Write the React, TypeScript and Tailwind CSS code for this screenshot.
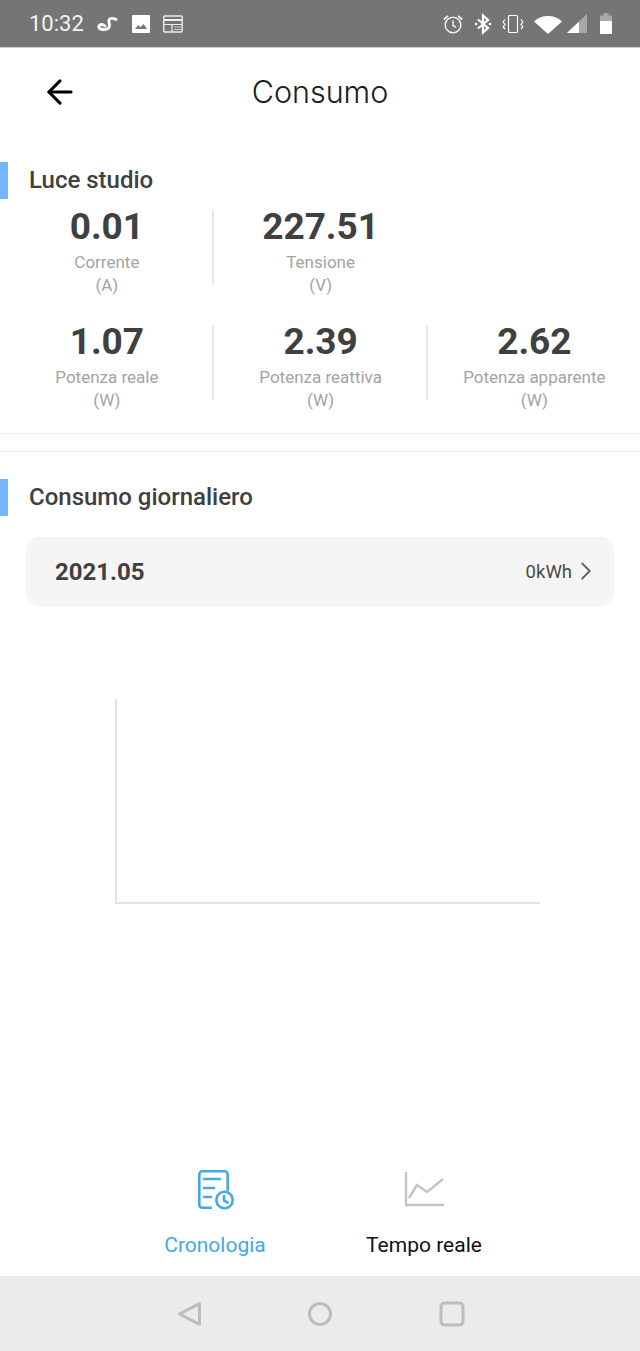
import { ArrowLeft, ChevronRight } from "lucide-react";

type Stat = { value: string; label: string; unit: string };

const topStats: Stat[] = [
  { value: "0.01", label: "Corrente", unit: "(A)" },
  { value: "227.51", label: "Tensione", unit: "(V)" },
];

const bottomStats: Stat[] = [
  { value: "1.07", label: "Potenza reale", unit: "(W)" },
  { value: "2.39", label: "Potenza reattiva", unit: "(W)" },
  { value: "2.62", label: "Potenza apparente", unit: "(W)" },
];

function StatusIcons() {
  return (
    <div className="flex items-center">
      {/* alarm */}
      <svg width="22" height="22" viewBox="0 0 22 22" fill="none" stroke="#fff" strokeWidth="1.5" className="opacity-90">
        <circle cx="11" cy="12" r="7.8" />
        <path d="M11 7.5v5l3 1.8" />
        <path d="M1.8 6.5 6 2.8M20.2 6.5 16 2.8" strokeWidth="1.7" />
      </svg>
      {/* bluetooth */}
      <svg width="20" height="22" viewBox="0 0 20 22" fill="none" stroke="#fff" strokeWidth="2.2" className="ml-[9px]">
        <path d="M5 6.5l10 8.5-5 4.5V2.500l5 4.500-10 8.500" />
        <circle cx="3" cy="11" r="1.300" fill="#fff" stroke="none" />
        <circle cx="17" cy="11" r="1.300" fill="#fff" stroke="none" />
      </svg>
      {/* vibrate */}
      <svg width="24" height="22" viewBox="0 0 24 22" fill="none" stroke="#fff" strokeWidth="1.2" className="ml-[8px]">
        <rect x="7.500" y="2.500" width="9" height="17" rx="1" />
        <path d="M4 6.500 2.200 9 4 11.500 2.200 14 4 16M20 6.500 21.800 9 20 11.500 21.800 14 20 16" />
      </svg>
      {/* wifi */}
      <svg width="30" height="22" viewBox="0 0 30 22" className="ml-[8px]">
        <path d="M1 8.500C5 4.600 9.600 3 15 3s10 1.600 14 5.500L15 21z" fill="#fff" />
      </svg>
      {/* signal */}
      <svg width="22" height="22" viewBox="0 0 22 22" className="ml-[3px]">
        <path d="M1 20 21 1v19z" fill="#a8a8a8" />
        <path d="M1 20 13 8.600V20z" fill="#fff" />
      </svg>
      {/* battery */}
      <svg width="14" height="22" viewBox="0 0 14 22" className="ml-[11px]">
        <path d="M4.500 0h5v2.500h3.500v5.500H1V2.500h3.500z" fill="#a8a8a8" />
        <path d="M1 8h12v12.500a.5.5 0 0 1-.5.5h-11a.5.5 0 0 1-.5-.5z" fill="#fff" />
      </svg>
    </div>
  );
}

function StatusBar() {
  return (
    <div className="flex h-[48px] items-center justify-between border-b border-b-[#cfcfcf] bg-[#757575] pl-[29px] pr-[27px] pt-[1px] text-white">
      <div className="flex items-center">
        <span className="w-[56px] text-[22px] leading-none font-[Roboto,sans-serif] text-[#f2f2f2]">10:32</span>
        {/* keyboard app squiggle */}
        <svg width="22" height="18" viewBox="0 0 22 18" fill="none" stroke="#fff" strokeLinecap="round" className="ml-[12px]">
          <path d="M19 4.500C16 2.500 11 3 12 7c1 4 1 7.500-5 7.500C3 14.500 1 13 2 11c1-2 4-2 6 0" strokeWidth="2.800" />
        </svg>
        {/* picture */}
        <svg width="18" height="18" viewBox="0 0 18 18" className="ml-[13px]">
          <path fillRule="evenodd" d="M1 0h16a1 1 0 0 1 1 1v16a1 1 0 0 1-1 1H1a1 1 0 0 1-1-1V1a1 1 0 0 1 1-1zm2 14h12l-3.500-5-3 3.200L6.400 10z" fill="#fff" />
        </svg>
        {/* calendar */}
        <svg width="20" height="18" viewBox="0 0 20 18" fill="none" className="ml-[13px]">
          <rect x="0.800" y="1" width="18.400" height="16" rx="1" stroke="#eee" strokeWidth="1.400" />
          <path d="M1 5h18" stroke="#eee" strokeWidth="2" />
          <path d="M1 9.500h18M9 9.500V17" stroke="#eee" strokeWidth="1.200" />
          <path d="M11 12h7M11 14.500h7" stroke="#ccc" strokeWidth="1.200" />
        </svg>
      </div>
      <StatusIcons />
    </div>
  );
}

function SectionTitle({ children }: { children: string }) {
  return (
    <div className="flex h-[37px] items-center">
      <div className="h-full w-2 bg-[#76b5ff]" />
      <h2 className="ml-[21px] pb-[2px] text-[24px] leading-none font-medium text-[#404040]">{children}</h2>
    </div>
  );
}

function StatCell({ stat, divider }: { stat: Stat; divider: boolean }) {
  return (
    <div className="relative flex w-[213.75px] shrink-0 flex-col items-center">
      <div className="text-[37px] leading-[44px] font-bold text-[#404040]">{stat.value}</div>
      <div className="mt-[2px] text-[17px] leading-[23px] text-[#a3a3a3]">{stat.label}</div>
      <div className="text-[17px] leading-[23px] text-[#a3a3a3]">{stat.unit}</div>
      {divider && <div className="absolute right-[-0.5px] top-[5px] h-[75px] w-[2px] bg-[#e8e8e8]" />}
    </div>
  );
}

function NavIcons() {
  return (
    <div className="flex h-[75px] items-center bg-[#ebebeb] pl-[177px]">
      <svg width="26" height="26" viewBox="0 0 26 26" fill="none" stroke="#bdbdbd" strokeWidth="3" strokeLinejoin="round">
        <path d="M22.500 2.700v20.600L2.500 13z" />
      </svg>
      <svg width="26" height="26" viewBox="0 0 26 26" fill="none" stroke="#bdbdbd" strokeWidth="3" className="ml-[104px]">
        <circle cx="13" cy="13" r="10.500" />
      </svg>
      <svg width="26" height="26" viewBox="0 0 26 26" fill="none" stroke="#bdbdbd" strokeWidth="3" className="ml-[106px]">
        <rect x="2" y="2" width="22" height="22" rx="3.500" />
      </svg>
    </div>
  );
}

export default function App() {
  return (
    <div className="flex h-[1351px] w-[640px] flex-col overflow-hidden bg-white font-[Roboto,sans-serif]">
      <StatusBar />

      <header className="relative flex h-[89px] items-center justify-center">
        <ArrowLeft className="absolute left-[41px] top-[25px] text-black" size={38} strokeWidth={1.9} />
        <h1 className="text-[30.500px] leading-none text-[#1c1c1c] font-[Inter,sans-serif] font-light">Consumo</h1>
      </header>

      <div className="mt-[25px]">
        <SectionTitle>Luce studio</SectionTitle>
      </div>

      <div className="mt-[6px] flex">
        {topStats.map((s, i) => (
          <StatCell key={s.label} stat={s} divider={i === 0} />
        ))}
      </div>
      <div className="mt-[23px] flex">
        {bottomStats.map((s, i) => (
          <StatCell key={s.label} stat={s} divider={i < 2} />
        ))}
      </div>

      <div className="mt-[21px] h-[19px] border-y border-[#ececec]" />

      <div className="mt-[27px]">
        <SectionTitle>Consumo giornaliero</SectionTitle>
      </div>

      <div className="mx-[26px] mt-[21px] flex h-[68px] items-center justify-between rounded-[14px] bg-[#f5f5f5] pl-[29px] pr-[13px] pt-[2px] shadow-[0_1px_2px_rgba(0,0,0,0.06)]">
        <span className="text-[24px] leading-none font-bold text-[#404040]">2021.05</span>
        <span className="flex items-center text-[18.500px] leading-none text-[#4a4a4a]">
          0kWh
          <ChevronRight className="-ml-[1px] -mt-[2px] text-[#666]" size={30} strokeWidth={1.5} />
        </span>
      </div>

      {/* empty chart axes */}
      <div className="ml-[115px] mt-[94px] h-[205px] w-[425px] border-b-2 border-l-2 border-[#e3e3e3]" />

      <div className="flex-1" />

      <div className="flex h-[112px] pl-[110px]">
        <div className="flex w-[210px] flex-col items-center">
          <svg width="40" height="42" viewBox="0 0 40 42" fill="none" stroke="#42a9e6" strokeWidth="2.600" strokeLinecap="round" className="mt-[5px] -ml-[1px]">
            <path d="M16 38.700H7.300a3 3 0 0 1-3-3V5.300a3 3 0 0 1 3-3h22.400a3 3 0 0 1 3 3V21" />
            <path d="M9 10h16M9 19h10M9 28h7" />
            <circle cx="29.500" cy="31" r="8.200" />
            <path d="M29 27v4.500l3.500 2" />
          </svg>
          <span className="mt-[24px] text-[21px] leading-none text-[#42a9e6]">Cronologia</span>
        </div>
        <div className="flex w-[208px] flex-col items-center">
          <svg width="42" height="40" viewBox="0 0 42 40" fill="none" stroke="#c4c4c4" strokeWidth="2.400" className="mt-[6px] -ml-[1px]">
            <path d="M3 2v33h38" />
            <path d="M6 28l8-13 10 7 16-13" />
          </svg>
          <span className="mt-[25px] text-[21px] leading-none text-[#111]">Tempo reale</span>
        </div>
      </div>

      <NavIcons />
    </div>
  );
}
